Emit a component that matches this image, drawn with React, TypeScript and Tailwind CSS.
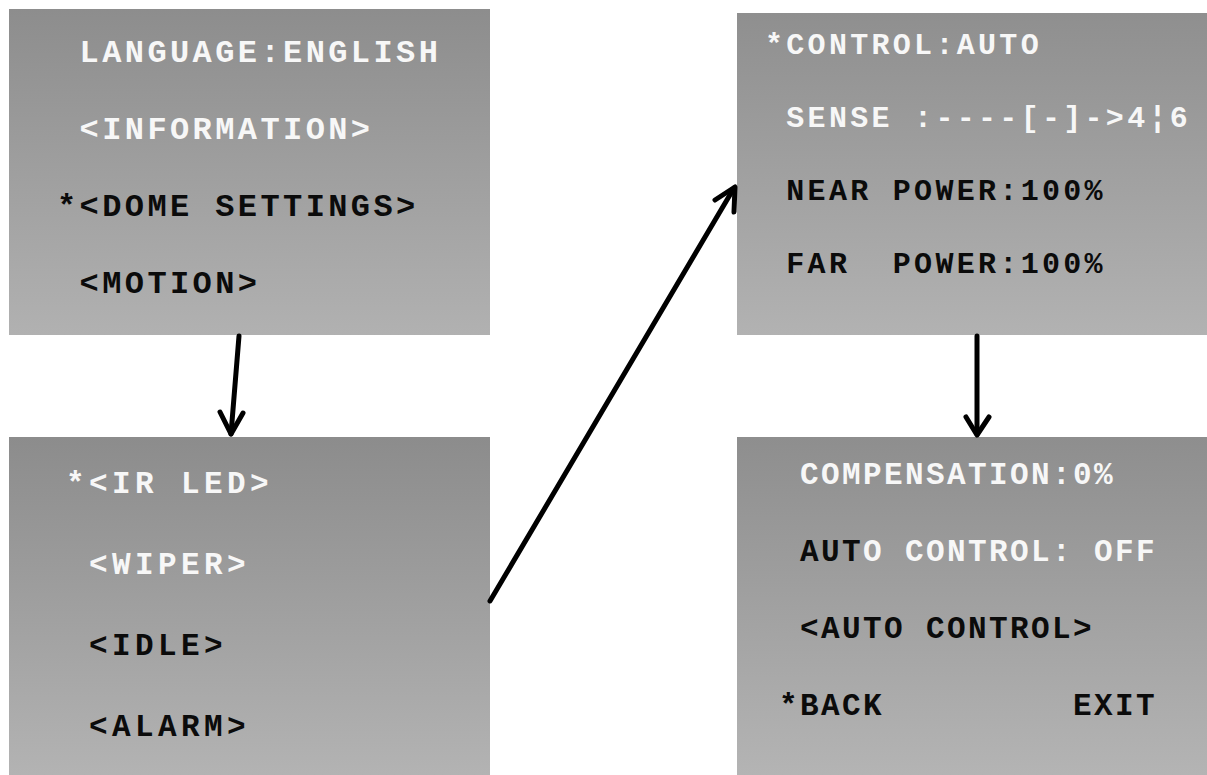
type Seg = { t: string; dark?: boolean };
type Line = Seg[];

const osd = "font-['Liberation_Mono','DejaVu_Sans_Mono',monospace] font-bold whitespace-pre";

function Row({ line }: { line: Line }) {
  return (
    <div>
      {line.map((s, i) => (
        <span key={i} className={s.dark ? "text-[#0b0b0b]" : "text-[#f7f7f7]"}>
          {s.t}
        </span>
      ))}
    </div>
  );
}

const mainMenu: Line[] = [
  [{ t: " LANGUAGE:ENGLISH" }],
  [{ t: " <INFORMATION>" }],
  [{ t: "*<DOME SETTINGS>", dark: true }],
  [{ t: " <MOTION>", dark: true }],
];

const domeMenu: Line[] = [
  [{ t: "*<IR LED>" }],
  [{ t: " <WIPER>" }],
  [{ t: " <IDLE>", dark: true }],
  [{ t: " <ALARM>", dark: true }],
];

const irMenu: Line[] = [
  [{ t: "*CONTROL:AUTO" }],
  [{ t: " SENSE :----[-]->4¦6" }],
  [{ t: " NEAR POWER:100%", dark: true }],
  [{ t: " FAR  POWER:100%", dark: true }],
];

const compMenu: Line[] = [
  [{ t: " COMPENSATION:0%" }],
  [{ t: " AUT", dark: true }, { t: "O CONTROL: OFF" }],
  [{ t: " <AUTO CONTROL>", dark: true }],
  [{ t: "*BACK         EXIT", dark: true }],
];

export default function App() {
  return (
    <div className="relative w-[1207px] h-[775px] bg-white overflow-hidden">
      <div className="grid grid-cols-[481px_470px] grid-rows-[326px_338px] gap-x-[247px] gap-y-[102px] pl-[9px] pt-[9px]">
        {/* main menu */}
        <div className={`bg-linear-to-b from-[#8d8d8d] to-[#b1b1b1] pl-[48px] pt-[6px] text-[32px] leading-[77px] tracking-[3.4px] ${osd}`}>
          {mainMenu.map((l, i) => (
            <Row key={i} line={l} />
          ))}
        </div>

        {/* IR / control */}
        <div className={`mt-[4px] flex flex-col gap-[6px] bg-linear-to-b from-[#8f8f8f] to-[#b2b2b2] pl-[28px] text-[30px] leading-[67px] tracking-[3.3px] ${osd}`}>
          {irMenu.map((l, i) => (
            <Row key={i} line={l} />
          ))}
        </div>

        {/* dome settings */}
        <div className={`bg-linear-to-b from-[#8c8c8c] to-[#b3b3b3] pl-[57px] pt-[7px] text-[31px] leading-[81px] tracking-[4.4px] ${osd}`}>
          {domeMenu.map((l, i) => (
            <Row key={i} line={l} />
          ))}
        </div>

        {/* compensation */}
        <div className={`bg-linear-to-b from-[#8e8e8e] to-[#b4b4b4] pl-[42px] text-[31px] leading-[77px] tracking-[2.4px] ${osd}`}>
          {compMenu.map((l, i) => (
            <Row key={i} line={l} />
          ))}
        </div>
      </div>

      {/* arrows */}
      <svg className="absolute inset-0 pointer-events-none" width="1207" height="775" viewBox="0 0 1207 775">
        <g stroke="#000" strokeWidth="5" strokeLinecap="round" strokeLinejoin="round" fill="none">
          <line x1="239" y1="336" x2="231" y2="434" />
          <polyline points="220,412 231,434 243,413" />
          <line x1="490" y1="601" x2="734" y2="188" />
          <polyline points="715,200 735,187 734,212" />
          <line x1="977" y1="336" x2="977" y2="434" />
          <polyline points="966,417 977,435 989,417" />
        </g>
      </svg>
    </div>
  );
}
